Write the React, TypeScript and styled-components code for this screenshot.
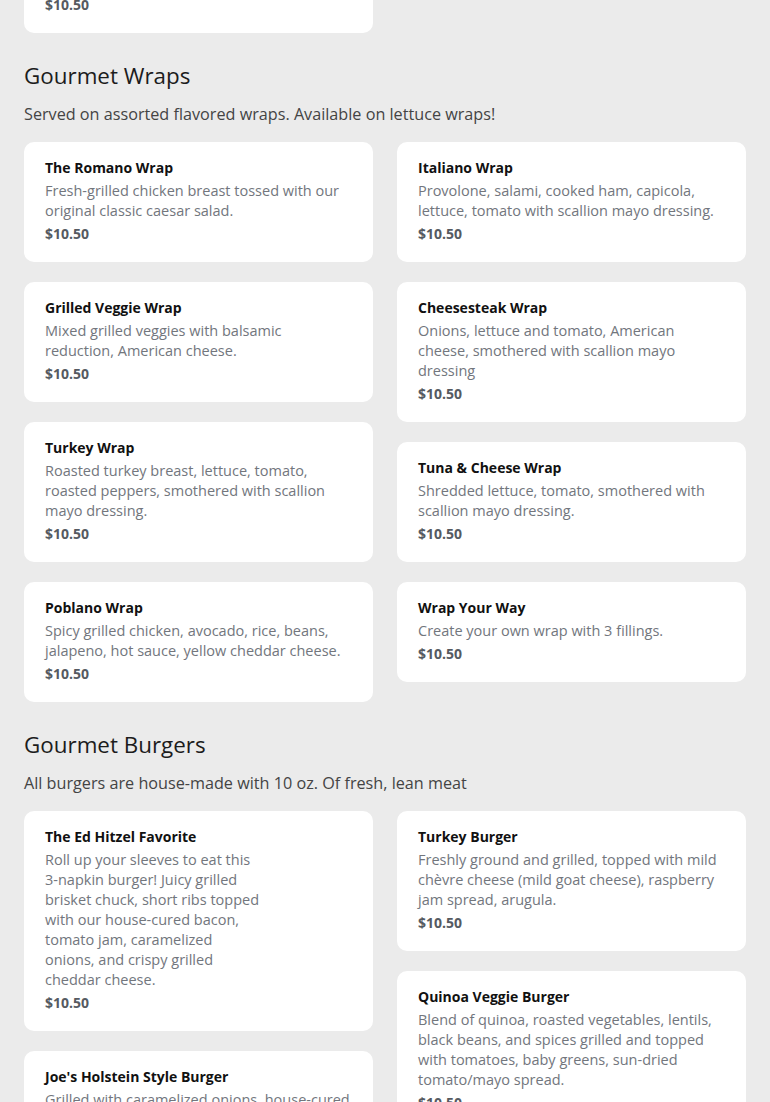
import React from "react";
import styled, { createGlobalStyle } from "styled-components";

interface Item {
  name: string;
  description: string;
  price: string;
  narrow?: boolean;
}

interface Section {
  title?: string;
  note?: string;
  items: Item[];
}

const sections: Section[] = [
  {
    items: [
      {
        name: "Garden Salad",
        description: "Mixed greens, tomato, cucumber, red onion, carrots with your choice of dressing.",
        price: "$10.50",
      },
    ],
  },
  {
    title: "Gourmet Wraps",
    note: "Served on assorted flavored wraps. Available on lettuce wraps!",
    items: [
      {
        name: "The Romano Wrap",
        description: "Fresh-grilled chicken breast tossed with our original classic caesar salad.",
        price: "$10.50",
      },
      {
        name: "Italiano Wrap",
        description: "Provolone, salami, cooked ham, capicola, lettuce, tomato with scallion mayo dressing.",
        price: "$10.50",
      },
      {
        name: "Grilled Veggie Wrap",
        description: "Mixed grilled veggies with balsamic reduction, American cheese.",
        price: "$10.50",
      },
      {
        name: "Cheesesteak Wrap",
        description: "Onions, lettuce and tomato, American cheese, smothered with scallion mayo dressing",
        price: "$10.50",
      },
      {
        name: "Turkey Wrap",
        description: "Roasted turkey breast, lettuce, tomato, roasted peppers, smothered with scallion mayo dressing.",
        price: "$10.50",
      },
      {
        name: "Tuna & Cheese Wrap",
        description: "Shredded lettuce, tomato, smothered with scallion mayo dressing.",
        price: "$10.50",
      },
      {
        name: "Poblano Wrap",
        description: "Spicy grilled chicken, avocado, rice, beans, jalapeno, hot sauce, yellow cheddar cheese.",
        price: "$10.50",
      },
      {
        name: "Wrap Your Way",
        description: "Create your own wrap with 3 fillings.",
        price: "$10.50",
      },
    ],
  },
  {
    title: "Gourmet Burgers",
    note: "All burgers are house-made with 10 oz. Of fresh, lean meat",
    items: [
      {
        name: "The Ed Hitzel Favorite",
        description:
          "Roll up your sleeves to eat this 3-napkin burger! Juicy grilled brisket chuck, short ribs topped with our house-cured bacon, tomato jam, caramelized onions, and crispy grilled cheddar cheese.",
        price: "$10.50",
        narrow: true,
      },
      {
        name: "Turkey Burger",
        description:
          "Freshly ground and grilled, topped with mild chèvre cheese (mild goat cheese), raspberry jam spread, arugula.",
        price: "$10.50",
      },
      {
        name: "Joe's Holstein Style Burger",
        description:
          "Grilled with caramelized onions, house-cured bacon, aged cheddar and our signature sauce.",
        price: "$10.50",
      },
      {
        name: "Quinoa Veggie Burger",
        description:
          "Blend of quinoa, roasted vegetables, lentils, black beans, and spices grilled and topped with tomatoes, baby greens, sun-dried tomato/mayo spread.",
        price: "$10.50",
      },
    ],
  },
];

const GlobalStyle = createGlobalStyle`
  html, body {
    margin: 0;
    padding: 0;
    background: #ebebeb;
  }

  body {
    font-family: "Open Sans", "Liberation Sans", sans-serif;
    -webkit-font-smoothing: antialiased;
  }
`;

const Page = styled.main`
  margin-top: -87px;
  padding: 0 24px 40px;
`;

const MenuSection = styled.section`
  margin-top: 27px;

  &:first-child {
    margin-top: 0;
  }
`;

const Heading = styled.h2`
  margin: 0;
  font-size: 22.4px;
  line-height: 32px;
  font-weight: 400;
  color: #1c1c1c;
`;

const Note = styled.p`
  margin: 10px 0 0;
  font-size: 16.2px;
  line-height: 24px;
  color: #444;
`;

const Columns = styled.div<{ spaced: boolean }>`
  display: grid;
  grid-template-columns: 1fr 1fr;
  gap: 24px;
  align-items: start;
  margin-top: ${({ spaced }) => (spaced ? "16px" : "0")};
`;

const Column = styled.div`
  display: flex;
  flex-direction: column;
  gap: 20px;
`;

const Card = styled.article`
  background: #fff;
  border-radius: 10px;
  padding: 16px 20px 18px 21px;
`;

const Name = styled.h3`
  margin: 0;
  font-size: 14px;
  line-height: 20px;
  font-weight: 700;
  color: #111;
`;

const Description = styled.p<{ narrow?: boolean }>`
  margin: 3px 0 0;
  max-width: ${({ narrow }) => (narrow ? "216px" : "none")};
  font-size: 14.5px;
  line-height: 20px;
  color: #72767d;
`;

const Price = styled.div`
  margin-top: 3px;
  font-size: 14px;
  line-height: 20px;
  font-weight: 700;
  color: #555a61;
`;

const MenuCard: React.FC<{ item: Item }> = ({ item }) => (
  <Card>
    <Name>{item.name}</Name>
    <Description narrow={item.narrow}>{item.description}</Description>
    <Price>{item.price}</Price>
  </Card>
);

const App: React.FC = () => (
  <>
    <GlobalStyle />
    <Page>
      {sections.map((section, i) => {
        const left = section.items.filter((_, idx) => idx % 2 === 0);
        const right = section.items.filter((_, idx) => idx % 2 === 1);

        return (
          <MenuSection key={i}>
            {section.title && <Heading>{section.title}</Heading>}
            {section.note && <Note>{section.note}</Note>}
            <Columns spaced={!!section.title}>
              <Column>
                {left.map(item => (
                  <MenuCard key={item.name} item={item} />
                ))}
              </Column>
              <Column>
                {right.map(item => (
                  <MenuCard key={item.name} item={item} />
                ))}
              </Column>
            </Columns>
          </MenuSection>
        );
      })}
    </Page>
  </>
);

export default App;
